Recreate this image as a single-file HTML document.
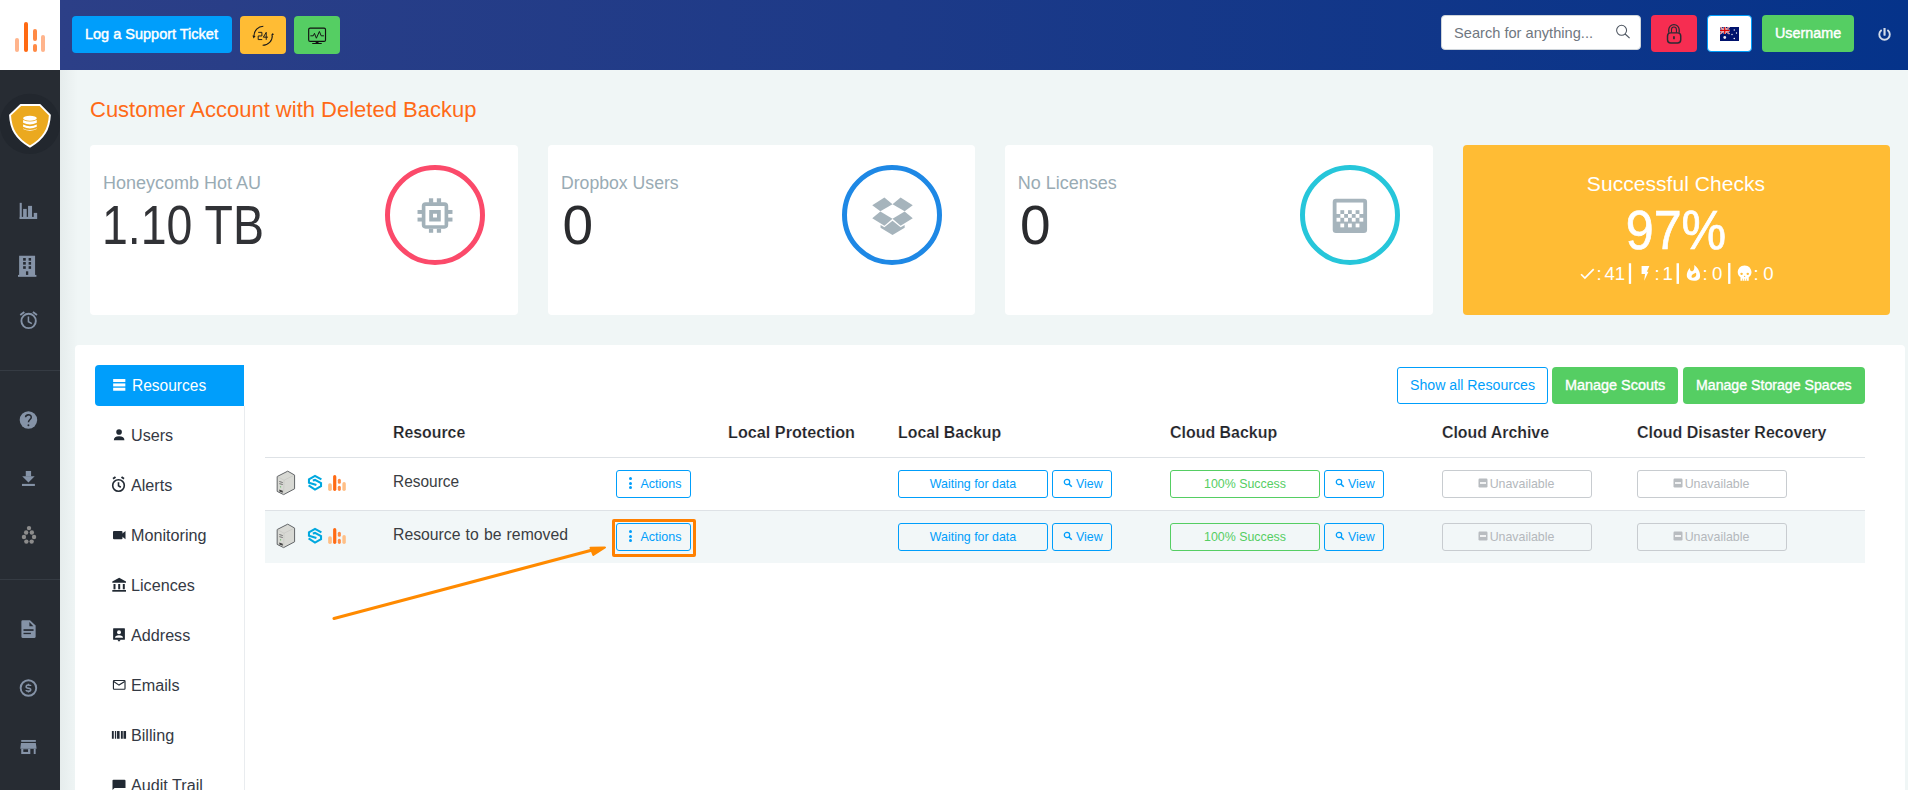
<!DOCTYPE html><html><head><meta charset="utf-8"><style>
html,body{margin:0;padding:0;width:1908px;height:790px;overflow:hidden;background:#f0f6f6;font-family:"Liberation Sans", sans-serif;}
.t{position:absolute;white-space:nowrap;}
.b{position:absolute;box-sizing:border-box;}
</style></head><body>
<div class="b" style="left:60px;top:0px;width:1848px;height:70px;background:linear-gradient(90deg,#2c3f87 0%,#1d3a88 45%,#05338a 100%);"></div>
<div class="b" style="left:0px;top:0px;width:60px;height:70px;background:#fff;"></div>
<div class="b" style="left:15px;top:38px;width:4.199999999999999px;height:14px;background:#ffb48c;border-radius:3px;"></div>
<div class="b" style="left:23.5px;top:21.8px;width:4.699999999999999px;height:30.2px;background:#ff6a13;border-radius:3px;"></div>
<div class="b" style="left:32.6px;top:29px;width:4.399999999999999px;height:11.5px;background:#ff8a45;border-radius:3px;"></div>
<div class="b" style="left:32.6px;top:44px;width:4.399999999999999px;height:8px;background:#ff8a45;border-radius:3px;"></div>
<div class="b" style="left:41px;top:35px;width:4px;height:17px;background:#ffb48c;border-radius:3px;"></div>
<div class="b" style="left:0px;top:70px;width:60px;height:720px;background:#272c33;"></div>
<div class="b" style="left:60px;top:70px;width:18px;height:720px;background:linear-gradient(90deg,rgba(0,20,20,0.045),rgba(0,0,0,0));"></div>
<div class="b" style="left:0px;top:370px;width:60px;height:1px;background:#353b43;"></div>
<div class="b" style="left:0px;top:579px;width:60px;height:1px;background:#353b43;"></div>
<div class="b" style="left:75px;top:345px;width:1830px;height:460px;background:#fff;border-radius:4px;"></div>
<div class="b" style="left:72px;top:16px;width:160px;height:37px;background:#009efb;border-radius:4px;"></div>
<div class="t" style="left:85.3px;top:25.70px;font-size:15px;line-height:15px;color:#fff;font-weight:400;transform:scaleX(0.966);transform-origin:0 0;-webkit-text-stroke:0.45px #fff;">Log a Support Ticket</div>
<div class="b" style="left:240px;top:16px;width:46px;height:38px;background:#ffbc34;border-radius:4px;"></div>
<div class="b" style="left:294px;top:16px;width:46px;height:38px;background:#55ce63;border-radius:4px;"></div>
<div class="b" style="left:1441px;top:15px;width:200px;height:35px;background:#fff;border-radius:4px;border:1px solid #ced4da;"></div>
<div class="t" style="left:1454px;top:24.90px;font-size:15px;line-height:15px;color:#6f7780;font-weight:400;transform:scaleX(0.975);transform-origin:0 0;">Search for anything...</div>
<div class="b" style="left:1651px;top:15px;width:46px;height:37px;background:#f62d51;border-radius:4px;"></div>
<div class="b" style="left:1707px;top:15px;width:45px;height:37px;background:#fff;border-radius:4px;border:1px solid #009efb;"></div>
<div class="b" style="left:1762px;top:15px;width:92px;height:37px;background:#55ce63;border-radius:4px;"></div>
<div class="t" style="left:1774.7px;top:24.98px;font-size:15.5px;line-height:15.5px;color:#fff;font-weight:400;transform:scaleX(0.925);transform-origin:0 0;-webkit-text-stroke:0.45px #fff;">Username</div>
<div class="t" style="left:90px;top:98.98px;font-size:22px;line-height:22px;color:#ff6a17;font-weight:400;">Customer Account with Deleted Backup</div>
<div class="b" style="left:90px;top:145px;width:428px;height:170px;background:#fff;border-radius:4px;"></div>
<div class="b" style="left:548px;top:145px;width:427px;height:170px;background:#fff;border-radius:4px;"></div>
<div class="b" style="left:1005px;top:145px;width:428px;height:170px;background:#fff;border-radius:4px;"></div>
<div class="b" style="left:1463px;top:145px;width:427px;height:170px;background:#ffbc34;border-radius:4px;"></div>
<div class="t" style="left:102.9px;top:173.56px;font-size:18px;line-height:18px;color:#99abb4;font-weight:400;">Honeycomb Hot AU</div>
<div class="t" style="left:101.5px;top:197.94px;font-size:55px;line-height:55px;color:#313236;font-weight:400;transform:scaleX(0.845);transform-origin:0 0;">1.10 TB</div>
<div class="t" style="left:560.5px;top:173.76px;font-size:18px;line-height:18px;color:#99abb4;font-weight:400;transform:scaleX(0.98);transform-origin:0 0;">Dropbox Users</div>
<div class="t" style="left:562.5px;top:197.94px;font-size:55px;line-height:55px;color:#2a2b2e;font-weight:400;">0</div>
<div class="t" style="left:1017.7px;top:173.76px;font-size:18px;line-height:18px;color:#99abb4;font-weight:400;">No Licenses</div>
<div class="t" style="left:1020px;top:197.94px;font-size:55px;line-height:55px;color:#2a2b2e;font-weight:400;">0</div>
<div class="b" style="left:385px;top:165px;width:100px;height:100px;border:5px solid #fb4a6a;border-radius:50%;"></div>
<div class="b" style="left:842px;top:165px;width:100px;height:100px;border:5px solid #1e88e5;border-radius:50%;"></div>
<div class="b" style="left:1300px;top:165px;width:100px;height:100px;border:5px solid #26c6da;border-radius:50%;"></div>
<div class="t" style="left:1676px;top:173.42px;font-size:21px;line-height:21px;color:#fff;font-weight:400;transform:translateX(-50%);letter-spacing:0.05px;">Successful Checks</div>
<div class="t" style="left:1676px;top:203.04px;font-size:55px;line-height:55px;color:#fff;font-weight:400;transform:translateX(-50%) scaleX(0.913);-webkit-text-stroke:0.7px #fff;">97%</div>
<div class="b" style="left:95px;top:365px;width:149px;height:41px;background:#009efb;border-radius:4px 0 0 4px;"></div>
<div class="b" style="left:244px;top:406px;width:1px;height:400px;background:#e9ecef;"></div>
<div class="t" style="left:131.5px;top:378.46px;font-size:16px;line-height:16px;color:#fff;font-weight:400;transform:scaleX(0.97);transform-origin:0 0;">Resources</div>
<div class="t" style="left:131.2px;top:428.36px;font-size:16px;line-height:16px;color:#343944;font-weight:400;transform:scaleX(1.01);transform-origin:0 0;">Users</div>
<div class="t" style="left:131.2px;top:478.36px;font-size:16px;line-height:16px;color:#343944;font-weight:400;transform:scaleX(1.01);transform-origin:0 0;">Alerts</div>
<div class="t" style="left:131.2px;top:528.36px;font-size:16px;line-height:16px;color:#343944;font-weight:400;transform:scaleX(1.01);transform-origin:0 0;">Monitoring</div>
<div class="t" style="left:131.2px;top:578.36px;font-size:16px;line-height:16px;color:#343944;font-weight:400;transform:scaleX(1.01);transform-origin:0 0;">Licences</div>
<div class="t" style="left:131.2px;top:628.36px;font-size:16px;line-height:16px;color:#343944;font-weight:400;transform:scaleX(1.01);transform-origin:0 0;">Address</div>
<div class="t" style="left:131.2px;top:678.36px;font-size:16px;line-height:16px;color:#343944;font-weight:400;transform:scaleX(1.01);transform-origin:0 0;">Emails</div>
<div class="t" style="left:131.2px;top:728.36px;font-size:16px;line-height:16px;color:#343944;font-weight:400;transform:scaleX(1.01);transform-origin:0 0;">Billing</div>
<div class="t" style="left:131.2px;top:778.36px;font-size:16px;line-height:16px;color:#343944;font-weight:400;transform:scaleX(1.01);transform-origin:0 0;">Audit Trail</div>
<div class="t" style="left:392.7px;top:425.46px;font-size:16px;line-height:16px;color:#1f2328;font-weight:700;transform:scaleX(0.99);transform-origin:0 0;-webkit-text-stroke:0.18px #fff;">Resource</div>
<div class="t" style="left:728px;top:425.46px;font-size:16px;line-height:16px;color:#1f2328;font-weight:700;transform:scaleX(1.013);transform-origin:0 0;-webkit-text-stroke:0.18px #fff;">Local Protection</div>
<div class="t" style="left:898px;top:425.46px;font-size:16px;line-height:16px;color:#1f2328;font-weight:700;transform:scaleX(0.992);transform-origin:0 0;-webkit-text-stroke:0.18px #fff;">Local Backup</div>
<div class="t" style="left:1170px;top:425.46px;font-size:16px;line-height:16px;color:#1f2328;font-weight:700;transform:scaleX(0.996);transform-origin:0 0;-webkit-text-stroke:0.18px #fff;">Cloud Backup</div>
<div class="t" style="left:1442px;top:425.46px;font-size:16px;line-height:16px;color:#1f2328;font-weight:700;transform:scaleX(0.992);transform-origin:0 0;-webkit-text-stroke:0.18px #fff;">Cloud Archive</div>
<div class="t" style="left:1637px;top:425.46px;font-size:16px;line-height:16px;color:#1f2328;font-weight:700;transform:scaleX(1.0);transform-origin:0 0;-webkit-text-stroke:0.18px #fff;">Cloud Disaster Recovery</div>
<div class="b" style="left:265px;top:457px;width:1600px;height:1px;background:#dee2e6;"></div>
<div class="b" style="left:265px;top:510px;width:1600px;height:1px;background:#dee2e6;"></div>
<div class="b" style="left:265px;top:511px;width:1600px;height:52px;background:#f2f7f8;"></div>
<div class="t" style="left:392.7px;top:473.66px;font-size:16px;line-height:16px;color:#3a3d42;font-weight:400;transform:scaleX(0.965);transform-origin:0 0;">Resource</div>
<div class="t" style="left:392.7px;top:527.46px;font-size:16px;line-height:16px;color:#3a3d42;font-weight:400;transform:scaleX(0.985);transform-origin:0 0;word-spacing:0.8px;">Resource to be removed</div>
<div class="b" style="left:616px;top:470px;width:75px;height:28px;border:1px solid #009efb;border-radius:3px;background:transparent;"></div>
<div class="t" style="left:640.4px;top:477.52px;font-size:12.5px;line-height:12.5px;color:#009efb;font-weight:400;">Actions</div>
<div class="b" style="left:898px;top:470px;width:150px;height:28px;border:1px solid #009efb;border-radius:3px;background:transparent;"></div>
<div class="t" style="left:973px;top:477.90px;font-size:12.4px;line-height:12.4px;color:#009efb;font-weight:400;transform:translateX(-50%);">Waiting for data</div>
<div class="b" style="left:1052px;top:470px;width:60px;height:28px;border:1px solid #009efb;border-radius:3px;background:transparent;"></div>
<div class="t" style="left:1076px;top:477.90px;font-size:12.4px;line-height:12.4px;color:#009efb;font-weight:400;">View</div>
<div class="b" style="left:1170px;top:470px;width:150px;height:28px;border:1px solid #55ce63;border-radius:3px;background:transparent;"></div>
<div class="t" style="left:1245px;top:477.90px;font-size:12.4px;line-height:12.4px;color:#55ce63;font-weight:400;transform:translateX(-50%);">100% Success</div>
<div class="b" style="left:1324px;top:470px;width:60px;height:28px;border:1px solid #009efb;border-radius:3px;background:transparent;"></div>
<div class="t" style="left:1348px;top:477.90px;font-size:12.4px;line-height:12.4px;color:#009efb;font-weight:400;">View</div>
<div class="b" style="left:1442px;top:470px;width:150px;height:28px;border:1px solid #c8ccd0;border-radius:3px;background:transparent;"></div>
<div class="t" style="left:1522px;top:477.90px;font-size:12.4px;line-height:12.4px;color:#b4b8bc;font-weight:400;transform:translateX(-50%);">Unavailable</div>
<div class="b" style="left:1637px;top:470px;width:150px;height:28px;border:1px solid #c8ccd0;border-radius:3px;background:transparent;"></div>
<div class="t" style="left:1717px;top:477.90px;font-size:12.4px;line-height:12.4px;color:#b4b8bc;font-weight:400;transform:translateX(-50%);">Unavailable</div>
<div class="b" style="left:616px;top:523px;width:75px;height:28px;border:1px solid #009efb;border-radius:3px;background:transparent;"></div>
<div class="t" style="left:640.4px;top:530.52px;font-size:12.5px;line-height:12.5px;color:#009efb;font-weight:400;">Actions</div>
<div class="b" style="left:898px;top:523px;width:150px;height:28px;border:1px solid #009efb;border-radius:3px;background:transparent;"></div>
<div class="t" style="left:973px;top:530.90px;font-size:12.4px;line-height:12.4px;color:#009efb;font-weight:400;transform:translateX(-50%);">Waiting for data</div>
<div class="b" style="left:1052px;top:523px;width:60px;height:28px;border:1px solid #009efb;border-radius:3px;background:transparent;"></div>
<div class="t" style="left:1076px;top:530.90px;font-size:12.4px;line-height:12.4px;color:#009efb;font-weight:400;">View</div>
<div class="b" style="left:1170px;top:523px;width:150px;height:28px;border:1px solid #55ce63;border-radius:3px;background:transparent;"></div>
<div class="t" style="left:1245px;top:530.90px;font-size:12.4px;line-height:12.4px;color:#55ce63;font-weight:400;transform:translateX(-50%);">100% Success</div>
<div class="b" style="left:1324px;top:523px;width:60px;height:28px;border:1px solid #009efb;border-radius:3px;background:transparent;"></div>
<div class="t" style="left:1348px;top:530.90px;font-size:12.4px;line-height:12.4px;color:#009efb;font-weight:400;">View</div>
<div class="b" style="left:1442px;top:523px;width:150px;height:28px;border:1px solid #c8ccd0;border-radius:3px;background:transparent;"></div>
<div class="t" style="left:1522px;top:530.90px;font-size:12.4px;line-height:12.4px;color:#b4b8bc;font-weight:400;transform:translateX(-50%);">Unavailable</div>
<div class="b" style="left:1637px;top:523px;width:150px;height:28px;border:1px solid #c8ccd0;border-radius:3px;background:transparent;"></div>
<div class="t" style="left:1717px;top:530.90px;font-size:12.4px;line-height:12.4px;color:#b4b8bc;font-weight:400;transform:translateX(-50%);">Unavailable</div>
<div class="b" style="left:1397px;top:367px;width:151px;height:37px;border:1px solid #009efb;border-radius:3px;background:transparent;"></div>
<div class="t" style="left:1410px;top:378.15px;font-size:14px;line-height:14px;color:#009efb;font-weight:400;transform:scaleX(1.01);transform-origin:0 0;">Show all Resources</div>
<div class="b" style="left:1552px;top:367px;width:126px;height:37px;background:#55ce63;border-radius:4px;"></div>
<div class="t" style="left:1565px;top:378.15px;font-size:14px;line-height:14px;color:#fff;font-weight:400;transform:scaleX(1.03);transform-origin:0 0;-webkit-text-stroke:0.35px #fff;">Manage Scouts</div>
<div class="b" style="left:1683px;top:367px;width:182px;height:37px;background:#55ce63;border-radius:4px;"></div>
<div class="t" style="left:1696px;top:378.15px;font-size:14px;line-height:14px;color:#fff;font-weight:400;transform:scaleX(1.01);transform-origin:0 0;-webkit-text-stroke:0.35px #fff;">Manage Storage Spaces</div>
<div class="b" style="left:612px;top:519px;width:84px;height:38px;border:3px solid #ff8000;border-radius:2px;"></div>
<svg class="b" style="left:240px;top:16px;" width="46" height="38" viewBox="0 0 956 790">
<g fill="none" stroke="#1a1a1a" stroke-width="22">
<path d="M485,213 A200,200 0 0 0 290,415"/>
<path d="M470,610 A200,200 0 0 0 672,400"/>
<path d="M378,340 L455,340 L455,415 L378,415 L378,490 L462,490" stroke-width="20"/>
<path d="M545,340 L485,440 L580,440 M545,340 L545,495" stroke-width="20"/>
</g>
<path d="M258,405 L325,415 L282,468 Z" fill="#1a1a1a"/>
<path d="M640,405 L705,392 L682,352 Z" fill="#1a1a1a"/>
</svg>
<svg class="b" style="left:294px;top:16px;" width="46" height="38" viewBox="0 0 956 790">
<rect x="305" y="252" width="350" height="275" rx="30" fill="none" stroke="#111" stroke-width="24"/>
<path d="M340,412 L400,412 L425,360 L465,462 L528,322 L565,412 L622,412" fill="none" stroke="#111" stroke-width="20" stroke-linejoin="round"/>
<rect x="450" y="527" width="60" height="35" fill="#111"/>
<rect x="375" y="560" width="205" height="22" rx="10" fill="#111"/>
</svg>
<svg class="b" style="left:1606px;top:18px;" width="100" height="32" viewBox="0 0 1908 611">
<circle cx="297" cy="235" r="95" fill="none" stroke="#4d5560" stroke-width="20"/>
<path d="M365,305 L450,385" stroke="#4d5560" stroke-width="22"/>
<path d="M1197,280 L1197,225 A100,100 0 0 1 1397,225 L1397,280" fill="none" stroke="#2b2b33" stroke-width="24"/><path d="M1250,280 L1250,225 A47,52 0 0 1 1344,225 L1344,280" fill="none" stroke="#2b2b33" stroke-width="20"/>
<rect x="1174" y="284" width="252" height="192" rx="60" fill="none" stroke="#2b2b33" stroke-width="28"/>
<rect x="1280" y="345" width="34" height="62" rx="17" fill="#2b2b33"/>
</svg>
<svg class="b" style="left:1720px;top:27px;" width="19" height="14" viewBox="0 0 38 28">
<rect width="38" height="28" fill="#00136e"/>
<g><path d="M0,0 L19,14 M19,0 L0,14" stroke="#fff" stroke-width="3"/>
<path d="M0,0 L19,14 M19,0 L0,14" stroke="#d00" stroke-width="1.2"/>
<path d="M9.5,0 V14 M0,7 H19" stroke="#fff" stroke-width="4.5"/>
<path d="M9.5,0 V14 M0,7 H19" stroke="#d00" stroke-width="2.6"/></g>
<circle cx="9.5" cy="21" r="2.8" fill="#e8e8f2"/>
<circle cx="28.5" cy="6" r="1.4" fill="#fff"/><circle cx="33" cy="12" r="1.3" fill="#fff"/>
<circle cx="24" cy="15" r="1.3" fill="#fff"/><circle cx="28.5" cy="23" r="1.5" fill="#fff"/>
</svg>
<svg class="b" style="left:1860px;top:18px;" width="48" height="34" viewBox="0 0 1115 790">
<path d="M490,290 A122,122 0 1 0 650,290" fill="none" stroke="#d3dbe9" stroke-width="44" stroke-linecap="round"/>
<rect x="545" y="235" width="50" height="175" rx="10" fill="#d3dbe9"/>
</svg>
<svg class="b" style="left:0px;top:80px;" width="60" height="90" viewBox="0 0 527 790">
<circle cx="263" cy="385" r="265" fill="#22272e"/>
<path d="M182,220 L352,220 L438,308 C432,430 385,515 263,585 C141,515 94,430 88,308 Z" fill="#eba91f" stroke="#fff" stroke-width="17" stroke-linejoin="round"/>
<g fill="#fff">
<ellipse cx="263" cy="335" rx="60" ry="22"/>
<path d="M203,350 Q263,380 323,350 L323,375 Q263,405 203,375 Z"/>
<path d="M203,390 Q263,420 323,390 L323,410 Q263,440 203,410 Z"/>
<path d="M203,425 Q263,455 323,425 L323,430 Q263,460 203,430 Z"/>
</g>
</svg>
<svg class="b" style="left:14px;top:196px;" width="30" height="30" viewBox="0 0 790 790"><g fill="#8593a7"><rect x="150" y="180" width="55" height="425"/><rect x="150" y="550" width="460" height="55"/><rect x="240" y="340" width="95" height="215"/><rect x="370" y="260" width="105" height="295"/><rect x="520" y="445" width="90" height="110"/></g></svg>
<svg class="b" style="left:14px;top:251px;" width="30" height="30" viewBox="0 0 790 790"><g fill="#8593a7"><rect x="135" y="125" width="420" height="515"/><rect x="105" y="630" width="485" height="50"/></g><g fill="#262b33"><rect x="240" y="185" width="70" height="70"/><rect x="385" y="185" width="65" height="70"/><rect x="240" y="290" width="70" height="70"/><rect x="385" y="290" width="65" height="70"/><rect x="240" y="400" width="70" height="70"/><rect x="385" y="400" width="65" height="70"/><rect x="315" y="535" width="60" height="95"/></g></svg>
<svg class="b" style="left:14px;top:305px;" width="30" height="30" viewBox="0 0 790 790"><g fill="none" stroke="#8593a7" stroke-width="50"><circle cx="385" cy="420" r="190"/><path d="M165,262 L272,185 M498,185 L605,262"/><path d="M380,305 L380,440 L470,492" stroke-width="40"/></g></svg>
<svg class="b" style="left:14px;top:405px;" width="30" height="30" viewBox="0 0 790 790"><circle cx="380" cy="395" r="230" fill="#8593a7"/><path d="M305,320 C305,250 455,230 455,320 C455,380 380,385 380,455" fill="none" stroke="#262b33" stroke-width="40"/><circle cx="380" cy="535" r="25" fill="#262b33"/></svg>
<svg class="b" style="left:14px;top:463px;" width="30" height="30" viewBox="0 0 790 790"><g fill="#8593a7"><rect x="310" y="210" width="140" height="145"/><path d="M215,350 L545,350 L380,515 Z"/><rect x="210" y="550" width="340" height="55"/></g></svg>
<svg class="b" style="left:14px;top:519px;" width="30" height="30" viewBox="0 0 790 790"><g fill="#8c8c8c"><circle cx="395" cy="240" r="58"/><circle cx="320" cy="355" r="58"/><circle cx="470" cy="355" r="58"/><circle cx="262" cy="475" r="58"/><circle cx="528" cy="475" r="58"/><circle cx="325" cy="595" r="58"/><circle cx="465" cy="595" r="58"/></g></svg>
<svg class="b" style="left:14px;top:614px;" width="30" height="30" viewBox="0 0 790 790"><path d="M225,165 L420,165 L570,300 L570,600 Q570,630 540,630 L225,630 Q195,630 195,600 L195,195 Q195,165 225,165 Z" fill="#8593a7"/><g fill="#262b33"><path d="M405,210 L405,320 L510,320 Z"/><rect x="250" y="400" width="265" height="45"/><rect x="250" y="495" width="195" height="35"/></g></svg>
<svg class="b" style="left:14px;top:673px;" width="30" height="30" viewBox="0 0 790 790"><circle cx="380" cy="395" r="205" fill="none" stroke="#8593a7" stroke-width="50"/><path d="M440,345 Q440,315 380,315 Q320,315 320,360 Q320,395 380,400 Q440,405 440,440 Q440,480 380,480 Q320,480 320,450" fill="none" stroke="#8593a7" stroke-width="40"/><path d="M380,285 V330 M380,465 V515" stroke="#8593a7" stroke-width="35"/></svg>
<svg class="b" style="left:14px;top:732px;" width="30" height="30" viewBox="0 0 790 790"><g fill="#8593a7"><rect x="190" y="210" width="385" height="50"/><path d="M185,290 L575,290 L595,440 L165,440 Z"/><rect x="190" y="440" width="240" height="140"/><rect x="520" y="440" width="50" height="140"/></g><rect x="245" y="455" width="125" height="70" fill="#262b33"/></svg>
<svg class="b" style="left:375px;top:155px;" width="120" height="120" viewBox="0 0 790 790">
<g fill="#a2b1b9">
<path d="M333,311 H457 Q482,311 482,336 V460 Q482,485 457,485 H333 Q308,485 308,460 V336 Q308,311 333,311 Z M332,335 V463 H458 V335 Z" fill-rule="evenodd"/>
<path d="M357,362 H433 V437 H357 Z M382,387 V412 H408 V387 Z" fill-rule="evenodd"/>
<rect x="355" y="285" width="28" height="30"/><rect x="407" y="285" width="28" height="30"/>
<rect x="355" y="485" width="28" height="27"/><rect x="407" y="485" width="28" height="27"/>
<rect x="280" y="362" width="30" height="26"/><rect x="280" y="412" width="30" height="26"/>
<rect x="480" y="362" width="30" height="26"/><rect x="480" y="412" width="30" height="26"/>
</g></svg>
<svg class="b" style="left:852px;top:175px;" width="80" height="80" viewBox="0 0 790 790">
<g fill="#a6b4bc">
<path d="M200,298 L320,222 L400,290 L280,358 Z"/>
<path d="M400,290 L480,222 L600,298 L520,358 Z"/>
<path d="M280,360 L400,432 L320,500 L200,428 Z"/>
<path d="M520,360 L600,428 L480,500 L400,432 Z"/>
<path d="M282,493 L320,515 L400,452 L480,515 L520,493 L520,522 L400,592 L282,522 Z"/>
</g></svg>
<svg class="b" style="left:1327.1px;top:192.9px;" width="45.8" height="45.8" viewBox="0 0 24 24"><rect x="3" y="3" width="18" height="18" rx="1.7" fill="#a6b4bc"/><rect x="5" y="5" width="14" height="6" fill="#fff"/><g fill="#a6b4bc"><rect x="7" y="9" width="2" height="2"/><rect x="11" y="9" width="2" height="2"/><rect x="15" y="9" width="2" height="2"/></g><g fill="#fff"><rect x="7" y="11" width="2" height="2"/><rect x="11" y="11" width="2" height="2"/><rect x="15" y="11" width="2" height="2"/><rect x="5" y="13" width="2" height="2"/><rect x="9" y="13" width="2" height="2"/><rect x="13" y="13" width="2" height="2"/><rect x="17" y="13" width="2" height="2"/><rect x="7" y="16" width="2" height="2"/><rect x="11" y="16" width="2" height="2"/><rect x="15" y="16" width="2" height="2"/></g></svg>
<svg class="b" style="left:1575px;top:258px;" width="105" height="32" viewBox="0 0 1908 581">
<path d="M110,295 L180,365 L340,200" fill="none" stroke="#fff" stroke-width="32"/>
<rect x="978" y="95" width="42" height="375" fill="#fff"/>
<path d="M1210,145 L1352,145 L1305,250 L1335,250 L1258,412 L1272,290 L1210,290 Z" fill="#fff"/>
<rect x="1845" y="95" width="45" height="375" fill="#fff"/>
</svg>
<svg class="b" style="left:1675px;top:258px;" width="105" height="32" viewBox="0 0 1908 581">
<path d="M350,125 C470,210 470,360 440,380 C400,430 260,430 225,360 C200,300 225,230 270,180 C270,240 300,250 330,230 C360,200 350,160 350,125 Z M300,340 C300,300 340,290 380,270 C400,320 370,360 330,360 C310,360 300,350 300,340 Z" fill="#fff" fill-rule="evenodd"/>
<rect x="965" y="90" width="42" height="380" fill="#fff"/>
<path d="M1265,135 C1345,135 1390,195 1390,260 C1390,310 1360,340 1340,350 V415 H1190 V350 C1170,340 1140,310 1140,260 C1140,195 1185,135 1265,135 Z" fill="#fff"/>
<circle cx="1210" cy="288" r="22" fill="#ffbc34"/><circle cx="1322" cy="288" r="22" fill="#ffbc34"/>
<path d="M1250,345 L1265,320 L1280,345 Z" fill="#ffbc34"/>
<rect x="1225" y="375" width="10" height="40" fill="#ffbc34"/><rect x="1260" y="375" width="10" height="40" fill="#ffbc34"/><rect x="1295" y="375" width="10" height="40" fill="#ffbc34"/>
</svg>
<div class="t" style="left:1596.5px;top:265.36px;font-size:18.6px;line-height:18.6px;color:#fff;font-weight:400;">:</div>
<div class="t" style="left:1604.5px;top:265.36px;font-size:18.6px;line-height:18.6px;color:#fff;font-weight:400;">41</div>
<div class="t" style="left:1654.5px;top:265.36px;font-size:18.6px;line-height:18.6px;color:#fff;font-weight:400;">:</div>
<div class="t" style="left:1662.5px;top:265.36px;font-size:18.6px;line-height:18.6px;color:#fff;font-weight:400;">1</div>
<div class="t" style="left:1702.5px;top:265.36px;font-size:18.6px;line-height:18.6px;color:#fff;font-weight:400;">:</div>
<div class="t" style="left:1711.9px;top:265.36px;font-size:18.6px;line-height:18.6px;color:#fff;font-weight:400;">0</div>
<div class="t" style="left:1753.5px;top:265.36px;font-size:18.6px;line-height:18.6px;color:#fff;font-weight:400;">:</div>
<div class="t" style="left:1763.3px;top:265.36px;font-size:18.6px;line-height:18.6px;color:#fff;font-weight:400;">0</div>
<svg class="b" style="left:272px;top:466px;" width="80" height="34" viewBox="0 0 1859 790">
<path d="M120,245 L365,120 L525,210 L525,530 L270,665 L120,590 Z" fill="#d8d9d4" stroke="#5a5d60" stroke-width="22" stroke-linejoin="round"/>
<path d="M280,330 L525,210 M280,330 L270,665 M120,245 L280,330" stroke="#b5b6b2" stroke-width="8" fill="none"/>
<path d="M170,360 L250,385 M170,410 L250,430" stroke="#555" stroke-width="18"/>
<circle cx="198" cy="485" r="16" fill="#5cb85c"/>
<path d="M170,545 L250,575 L250,620 L170,590 Z" fill="#444"/>

<rect x="1305" y="400" width="85" height="178" rx="40" fill="#ffbf86"/>
<rect x="1420" y="210" width="75" height="368" rx="37" fill="#ff6a13"/>
<rect x="1530" y="295" width="70" height="115" rx="35" fill="#ff8b45"/>
<rect x="1530" y="460" width="70" height="118" rx="35" fill="#ff8b45"/>
<rect x="1635" y="370" width="80" height="208" rx="40" fill="#ffbf86"/>
</svg>
<svg class="b" style="left:272px;top:519px;" width="80" height="34" viewBox="0 0 1859 790">
<path d="M120,245 L365,120 L525,210 L525,530 L270,665 L120,590 Z" fill="#d8d9d4" stroke="#5a5d60" stroke-width="22" stroke-linejoin="round"/>
<path d="M280,330 L525,210 M280,330 L270,665 M120,245 L280,330" stroke="#b5b6b2" stroke-width="8" fill="none"/>
<path d="M170,360 L250,385 M170,410 L250,430" stroke="#555" stroke-width="18"/>
<circle cx="198" cy="485" r="16" fill="#5cb85c"/>
<path d="M170,545 L250,575 L250,620 L170,590 Z" fill="#444"/>

<rect x="1305" y="400" width="85" height="178" rx="40" fill="#ffbf86"/>
<rect x="1420" y="210" width="75" height="368" rx="37" fill="#ff6a13"/>
<rect x="1530" y="295" width="70" height="115" rx="35" fill="#ff8b45"/>
<rect x="1530" y="460" width="70" height="118" rx="35" fill="#ff8b45"/>
<rect x="1635" y="370" width="80" height="208" rx="40" fill="#ffbf86"/>
</svg>
<svg class="b" style="left:304px;top:472px;" width="22" height="22" viewBox="0 0 790 790"><g fill="none" stroke="#00a8df" stroke-width="74" stroke-linejoin="miter"><path d="M625,268 L395,140 L178,260 L178,385 L445,470"/><path d="M165,480 L395,632 L612,510 L612,400 L395,285 L315,305"/></g></svg>
<svg class="b" style="left:304px;top:525px;" width="22" height="22" viewBox="0 0 790 790"><g fill="none" stroke="#00a8df" stroke-width="74" stroke-linejoin="miter"><path d="M625,268 L395,140 L178,260 L178,385 L445,470"/><path d="M165,480 L395,632 L612,510 L612,400 L395,285 L315,305"/></g></svg>
<svg class="b" style="left:108px;top:372px;" width="24" height="74" viewBox="0 0 256 790">
<g fill="#fff"><rect x="55" y="75" width="130" height="32"/><rect x="55" y="122" width="130" height="32"/><rect x="55" y="168" width="130" height="32"/></g>
<g fill="#212933"><circle cx="118" cy="640" r="30"/><path d="M62,728 Q62,685 118,685 Q175,685 175,728 Z"/></g></svg>
<svg class="b" style="left:108px;top:476px;" width="24" height="18" viewBox="0 0 24 18"><g fill="none" stroke="#212933" stroke-width="1.6"><circle cx="10.5" cy="9.5" r="5.8"/><path d="M10.5,6.3 V9.8 L12.8,11.2"/><path d="M5,2.8 L7.5,1 M16,2.8 L13.5,1" stroke-width="1.8"/></g></svg>
<svg class="b" style="left:108px;top:526px;" width="24" height="18" viewBox="0 0 24 18"><g fill="#212933"><rect x="5" y="5" width="9.5" height="8.3" rx="1"/><path d="M14,7.8 L17.5,5 V13.3 L14,10.5 Z"/></g></svg>
<svg class="b" style="left:108px;top:576px;" width="24" height="18" viewBox="0 0 24 18"><g fill="#212933"><path d="M4.3,5.5 L11.2,1.8 L18,5.5 V6.8 H4.3 Z"/><rect x="5.5" y="8" width="2" height="5.3"/><rect x="10.2" y="8" width="2" height="5.3"/><rect x="14.8" y="8" width="2" height="5.3"/><rect x="4.3" y="14" width="13.7" height="1.7"/></g></svg>
<svg class="b" style="left:108px;top:620px;" width="24" height="30" viewBox="0 0 632 790"><rect x="135" y="215" width="310" height="305" rx="15" fill="#212933"/><path d="M240,515 L290,575 L340,515 Z" fill="#212933"/><circle cx="290" cy="325" r="52" fill="#fff"/><path d="M185,468 Q185,400 290,400 Q395,400 395,468 Z" fill="#fff"/></svg>
<svg class="b" style="left:108px;top:672px;" width="24" height="30" viewBox="0 0 632 790"><rect x="143" y="225" width="305" height="230" rx="18" fill="none" stroke="#212933" stroke-width="30"/><path d="M150,250 L290,345 L440,250" fill="none" stroke="#212933" stroke-width="30"/></svg>
<svg class="b" style="left:108px;top:722px;" width="24" height="22" viewBox="0 0 279 256"><g fill="#212933"><rect x="45" y="105" width="22" height="90"/><rect x="80" y="105" width="15" height="90"/><rect x="105" y="105" width="30" height="90"/><rect x="150" y="105" width="22" height="90"/><rect x="180" y="105" width="30" height="90"/></g></svg>
<svg class="b" style="left:108px;top:778px;" width="24" height="12" viewBox="0 0 24 12"><path d="M4.5,2.5 Q4.5,1.8 5.5,1.8 H16.5 Q17.5,1.8 17.5,2.8 V10 H6.5 L4.5,12 Z" fill="#212933"/></svg>
<div class="b" style="left:629.3px;top:477.4px;width:3.0px;height:3.0px;background:#009efb;border-radius:50%;"></div>
<div class="b" style="left:629.3px;top:481.6px;width:3.0px;height:3.0px;background:#009efb;border-radius:50%;"></div>
<div class="b" style="left:629.3px;top:485.8px;width:3.0px;height:3.0px;background:#009efb;border-radius:50%;"></div>
<svg class="b" style="left:1062.8px;top:478px;" width="10" height="10" viewBox="0 0 10 10"><circle cx="4" cy="4" r="2.7" fill="none" stroke="#009efb" stroke-width="1.25"/><path d="M6,6 L8.8,8.8" stroke="#009efb" stroke-width="1.6"/></svg>
<svg class="b" style="left:1334.8px;top:478px;" width="10" height="10" viewBox="0 0 10 10"><circle cx="4" cy="4" r="2.7" fill="none" stroke="#009efb" stroke-width="1.25"/><path d="M6,6 L8.8,8.8" stroke="#009efb" stroke-width="1.6"/></svg>
<svg class="b" style="left:1478px;top:478px;" width="10" height="10" viewBox="0 0 10 10"><rect x="0.5" y="0.5" width="9" height="9" rx="1.2" fill="#b8bcc0"/><rect x="2" y="4.2" width="6" height="1.6" fill="#fff"/></svg>
<svg class="b" style="left:1673px;top:478px;" width="10" height="10" viewBox="0 0 10 10"><rect x="0.5" y="0.5" width="9" height="9" rx="1.2" fill="#b8bcc0"/><rect x="2" y="4.2" width="6" height="1.6" fill="#fff"/></svg>
<div class="b" style="left:629.3px;top:530.4px;width:3.0px;height:3.0px;background:#009efb;border-radius:50%;"></div>
<div class="b" style="left:629.3px;top:534.6px;width:3.0px;height:3.0px;background:#009efb;border-radius:50%;"></div>
<div class="b" style="left:629.3px;top:538.8px;width:3.0px;height:3.0px;background:#009efb;border-radius:50%;"></div>
<svg class="b" style="left:1062.8px;top:531px;" width="10" height="10" viewBox="0 0 10 10"><circle cx="4" cy="4" r="2.7" fill="none" stroke="#009efb" stroke-width="1.25"/><path d="M6,6 L8.8,8.8" stroke="#009efb" stroke-width="1.6"/></svg>
<svg class="b" style="left:1334.8px;top:531px;" width="10" height="10" viewBox="0 0 10 10"><circle cx="4" cy="4" r="2.7" fill="none" stroke="#009efb" stroke-width="1.25"/><path d="M6,6 L8.8,8.8" stroke="#009efb" stroke-width="1.6"/></svg>
<svg class="b" style="left:1478px;top:531px;" width="10" height="10" viewBox="0 0 10 10"><rect x="0.5" y="0.5" width="9" height="9" rx="1.2" fill="#b8bcc0"/><rect x="2" y="4.2" width="6" height="1.6" fill="#fff"/></svg>
<svg class="b" style="left:1673px;top:531px;" width="10" height="10" viewBox="0 0 10 10"><rect x="0.5" y="0.5" width="9" height="9" rx="1.2" fill="#b8bcc0"/><rect x="2" y="4.2" width="6" height="1.6" fill="#fff"/></svg>
<svg class="b" style="left:320px;top:530px;" width="300" height="100" viewBox="0 0 300 100"><path d="M14,88.5 L278,18.5" stroke="#ff8a00" stroke-width="3" stroke-linecap="round"/><path d="M285,17.5 L270.5,17.7 L273.3,25 Z" fill="#ff8a00" stroke="#ff8a00" stroke-width="2" stroke-linejoin="round"/></svg>
</body></html>
